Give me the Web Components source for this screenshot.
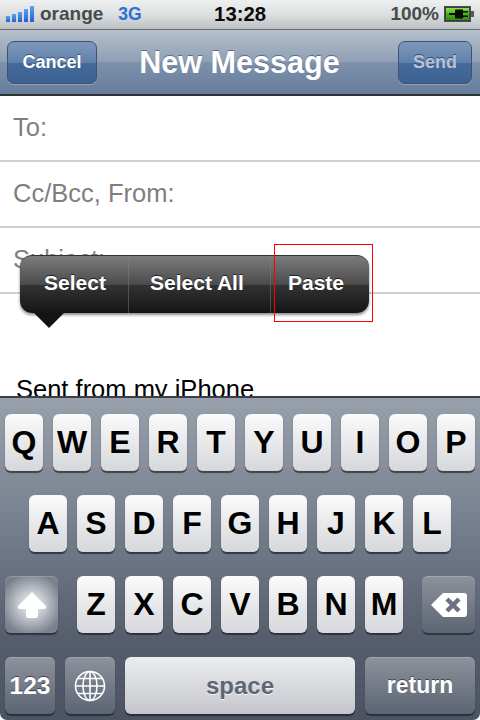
<!DOCTYPE html>
<html>
<head>
<meta charset="utf-8">
<style>
    html, body {
        margin: 0;
        padding: 0;
        background: #000;
        font-family: "Liberation Sans", Arial, sans-serif;
    }
</style>
</head>
<body>

<ios-screen>
    <ios-status-bar></ios-status-bar>
    <ios-nav-bar title="New Message"></ios-nav-bar>
    <mail-compose>
        <mail-field>To:</mail-field>
        <mail-field>Cc/Bcc, From:</mail-field>
        <mail-field>Subject:</mail-field>
        <mail-body>Sent from my iPhone</mail-body>
    </mail-compose>
    <ios-keyboard></ios-keyboard>

    <edit-menu>
        <menu-item style="width:109px;padding-left:24px">Select</menu-item>
        <menu-item style="width:142px;padding-left:21px">Select All</menu-item>
        <menu-item style="width:98px;padding-left:17px">Paste</menu-item>
    </edit-menu>
    <!-- red annotation around Paste -->
    <callout-box></callout-box>
</ios-screen>

<script>
function define(name, css, html, setup) {
    customElements.define(name, class extends HTMLElement {
        constructor() {
            super();
            this.attachShadow({mode: "open"});
            this.shadowRoot.innerHTML = `<style>${css}</style>${html}`;
        }
        connectedCallback() {
            if (setup) {
                setup(this);
            }
        }
    });
}

define("ios-screen", `
    :host {
        display: flex;
        flex-direction: column;
        position: relative;
        width: 480px;
        height: 720px;
        overflow: hidden;
        background: #fff;
    }
`, `<slot></slot>`);

define("ios-status-bar", `
    :host {
        display: flex;
        align-items: center;
        position: relative;
        box-sizing: border-box;
        height: 30px;
        flex-shrink: 0;
        padding: 0 6px 1px 6px;
        font-weight: bold;
        color: #474a4d;
        background: linear-gradient(#eef0f0, #dcdfe0 50%, #bcc0c3);
        border-bottom: 1px solid #696d70;
    }
    .carrier { font-size: 19px; margin-left: 6px; }
    .net { font-size: 17.5px; margin-left: 15px; color: #2a6ed6; }
    .time {
        flex: 1;
        text-align: center;
        font-size: 20.3px;
        color: #0a0a0a;
        padding-right: 52px;
    }
    .level { font-size: 19px; margin-right: 5px; }
    svg { display: block; }
`, `
    <svg width="28" height="16" viewBox="0 0 28 16">
        <defs>
            <linearGradient id="sig" x1="0" y1="0" x2="0" y2="1">
                <stop offset="0" stop-color="#5aa2ee"/>
                <stop offset="1" stop-color="#1f62cf"/>
            </linearGradient>
        </defs>
        <rect x="0" y="10" width="4" height="6" fill="url(#sig)"/>
        <rect x="6" y="8" width="4" height="8" fill="url(#sig)"/>
        <rect x="12" y="6" width="4" height="10" fill="url(#sig)"/>
        <rect x="18" y="3" width="4" height="13" fill="url(#sig)"/>
        <rect x="24" y="0" width="4" height="16" fill="url(#sig)"/>
    </svg>
    <span class="carrier">orange</span>
    <span class="net">3G</span>
    <span class="time">13:28</span>
    <span class="level">100%</span>
    <svg width="30" height="16" viewBox="0 0 30 16">
        <defs>
            <linearGradient id="bat" x1="0" y1="0" x2="0" y2="1">
                <stop offset="0" stop-color="#8fe04a"/>
                <stop offset=".5" stop-color="#43b612"/>
                <stop offset="1" stop-color="#2f8f0c"/>
            </linearGradient>
        </defs>
        <rect x=".5" y=".5" width="26" height="15" fill="#3c3f41" stroke="#4a4d4f"/>
        <rect x="2" y="2" width="23" height="12" fill="url(#bat)"/>
        <rect x="27" y="5" width="3" height="6" fill="#55585a"/>
        <path d="M5 7H11V4.5Q11 3.5 12 3.5H19V5H24V6.5H19V9.5H24V11H19V12.5H12Q11 12.5 11 11.5V9H5Z" fill="#0a0a0a"/>
    </svg>
`);

define("ios-nav-bar", `
    :host {
        display: grid;
        grid-template-columns: 1fr auto 1fr;
        align-items: center;
        box-sizing: border-box;
        height: 66px;
        flex-shrink: 0;
        padding: 11px 8px 10px 7px;
        background: linear-gradient(#b6c0cd, #8e9eb4 50%, #7d91ac 51%, #677d9b);
        border-bottom: 2px solid #2d3338;
    }
    .title {
        font-size: 30.6px;
        font-weight: bold;
        color: #fff;
        text-shadow: 0 -1px 0 #5d6c82;
    }
    .btn {
        box-sizing: border-box;
        height: 43px;
        display: flex;
        align-items: center;
        justify-content: center;
        font-size: 18px;
        font-weight: bold;
        color: #fff;
        border: 1px solid #3f5270;
        border-radius: 7px;
        background: linear-gradient(#7f98b9, #5f81ac 50%, #44699b 51%, #3d6395);
        box-shadow: 0 1px 0 rgba(255,255,255,.25);
        text-shadow: 0 -1px 0 #3a4f6e;
    }
    .cancel { width: 90px; }
    .send { width: 74px; color: #b5c3d6; justify-self: end; }
`, `
    <div class="btn cancel">Cancel</div>
    <div class="title"></div>
    <div class="btn send">Send</div>
`, (el) => {
    el.shadowRoot.querySelector(".title").textContent = el.getAttribute("title");
});

define("mail-compose", `
    :host {
        display: flex;
        flex-direction: column;
        flex: 1;
        min-height: 0;
        overflow: hidden;
        background: #fff;
    }
`, `<slot></slot>`);

define("mail-field", `
    :host {
        display: flex;
        align-items: center;
        box-sizing: border-box;
        height: 66px;
        flex-shrink: 0;
        padding: 0 0 1px 13px;
        font-size: 25.5px;
        color: #7f7f7f;
        border-bottom: 2px solid #cfcfcf;
    }
`, `<slot></slot>`);

define("mail-body", `
    :host {
        display: block;
        padding: 81px 0 0 16px;
        font-size: 25.5px;
        line-height: 29px;
        color: #000;
        white-space: nowrap;
    }
`, `<slot></slot>`);

define("kbd-key", `
    :host {
        display: flex;
        align-items: center;
        justify-content: center;
        box-sizing: border-box;
        width: 38px;
        height: 57px;
        flex-shrink: 0;
        border-radius: 6px;
        font-weight: bold;
        font-size: 32px;
        color: #000;
        background: linear-gradient(#fbfbfc, #e6e7e9 55%, #d6d7db);
        box-shadow: 0 2px 1px rgba(20,24,32,.65);
    }
    :host([dark]) {
        color: #fff;
        font-size: 24.5px;
        background: linear-gradient(#8d929c, #5c6473);
        box-shadow: 0 2px 1px rgba(20,24,32,.6), inset 0 1px 0 rgba(255,255,255,.18);
        text-shadow: 0 -1px 0 #3d4350;
    }
    :host([shift]) {
        background: radial-gradient(circle at 50% 50%, #f0f1f2 0, #c3c7cc 35%, #7a818d 80%);
    }
    :host([space]) {
        color: #5d6675;
        font-size: 24px;
        background: linear-gradient(#ecedef, #c4c6cc);
        text-shadow: 0 1px 0 #f4f4f5;
    }
`, `<slot></slot>`);

define("ios-keyboard", `
    :host {
        display: flex;
        flex-direction: column;
        gap: 24px;
        box-sizing: border-box;
        height: 324px;
        flex-shrink: 0;
        padding: 16px 5px 0 5px;
        background: linear-gradient(#98a0ab, #7a8391 35%, #565e6d 75%, #4c5463);
        border-top: 2px solid #3c3f44;
        border-radius: 0 0 7px 7px;
    }
    .row { display: flex; gap: 10px; }
    .indent { padding-left: 24px; }
    .shift { width: 53px; margin-right: 9px; }
    .del { width: 53px; margin-left: 9px; }
    .w50 { width: 50px; }
    .grow { flex: 1; }
    .w110 { width: 110px; font-size: 23px; }
    svg { display: block; }
`, `
    <div class="row">
        ${[..."QWERTYUIOP"].map((c) => `<kbd-key>${c}</kbd-key>`).join("")}
    </div>
    <div class="row indent">
        ${[..."ASDFGHJKL"].map((c) => `<kbd-key>${c}</kbd-key>`).join("")}
    </div>
    <div class="row">
        <kbd-key dark shift class="shift">
            <svg width="30" height="28" viewBox="0 0 30 28">
                <path d="M15 1 L29 15 Q30 18 27 18 H21 V25 Q21 27 19 27 H11 Q9 27 9 25 V18 H3 Q0 18 1 15 Z" fill="#fff"/>
            </svg>
        </kbd-key>
        ${[..."ZXCVBNM"].map((c) => `<kbd-key>${c}</kbd-key>`).join("")}
        <kbd-key dark class="del">
            <svg width="36" height="24" viewBox="0 0 36 24">
                <path d="M12 0 H33 Q36 0 36 3 V21 Q36 24 33 24 H12 L0 12 Z" fill="#fff"/>
                <path d="M16 6 L28 18 M28 6 L16 18" stroke="#6c7380" stroke-width="4.5" fill="none"/>
            </svg>
        </kbd-key>
    </div>
    <div class="row">
        <kbd-key dark class="w50">123</kbd-key>
        <kbd-key dark class="w50">
            <svg width="32" height="32" viewBox="0 0 32 32" fill="none" stroke="#fff" stroke-width="1.6">
                <circle cx="16" cy="16" r="14.5"/>
                <ellipse cx="16" cy="16" rx="7" ry="14.5"/>
                <path d="M16 1.5 V30.5 M1.5 16 H30.5 M4 8.5 H28 M4 23.5 H28"/>
            </svg>
        </kbd-key>
        <kbd-key space class="grow">space</kbd-key>
        <kbd-key dark class="w110">return</kbd-key>
    </div>
`);

define("edit-menu", `
    :host {
        display: flex;
        position: absolute;
        left: 20px;
        top: 255px;
        width: 349px;
        height: 58px;
        border-radius: 12px;
        color: #fff;
        background: linear-gradient(#7c7c7c, #4b4b4b 50%, #333 51%, #151515);
        border-top: 1px solid #333;
        box-sizing: border-box;
        box-shadow: 0 2px 3px rgba(0,0,0,.45);
    }
    .tip {
        position: absolute;
        left: 14px;
        top: 57px;
        width: 30px;
        height: 15px;
        background: #141414;
        clip-path: polygon(0 0, 100% 0, 50% 100%);
    }
`, `<slot></slot><div class="tip"></div>`);

define("menu-item", `
    :host {
        display: flex;
        align-items: center;
        box-sizing: border-box;
        height: 100%;
        padding-bottom: 4px;
        font-size: 21px;
        font-weight: bold;
        text-shadow: 0 -1px 0 #222;
        border-right: 1px solid rgba(130,130,130,.45);
    }
    :host(:last-child) { border-right: none; }
`, `<slot></slot>`);

define("callout-box", `
    :host {
        display: block;
        position: absolute;
        left: 274px;
        top: 244px;
        width: 99px;
        height: 78px;
        box-sizing: border-box;
        border: 1px solid #f00;
    }
`, ``);
</script>
</body>
</html>
